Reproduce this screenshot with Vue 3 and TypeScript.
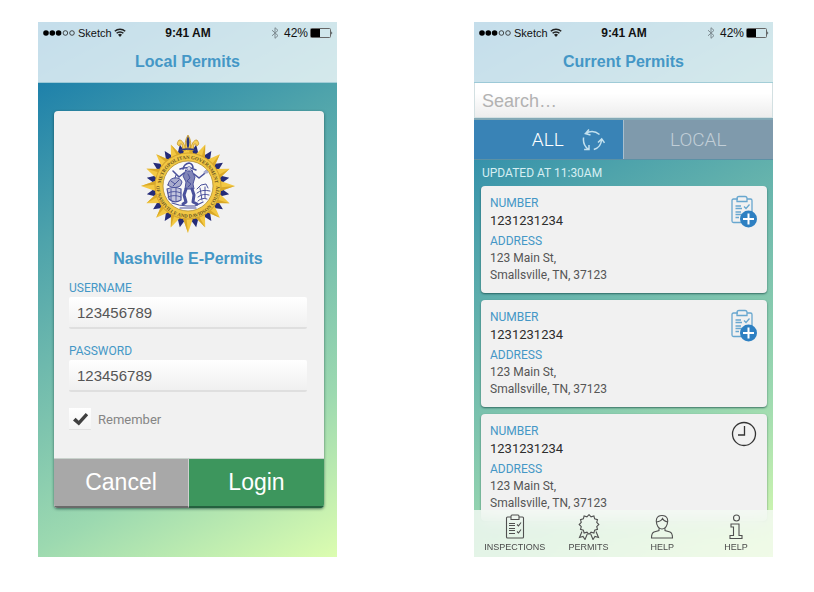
<script setup lang="ts">
import { ref } from 'vue'

interface Permit {
  id: number
  number: string
  street: string
  city: string
  status: 'add' | 'pending'
}

const username = ref('123456789')
const password = ref('123456789')
const remember = ref(true)
const query = ref('')
const filter = ref<'all' | 'local'>('all')

const permits: Permit[] = [
  { id: 1, number: '1231231234', street: '123 Main St,', city: 'Smallsville, TN, 37123', status: 'add' },
  { id: 2, number: '1231231234', street: '123 Main St,', city: 'Smallsville, TN, 37123', status: 'add' },
  { id: 3, number: '1231231234', street: '123 Main St,', city: 'Smallsville, TN, 37123', status: 'pending' },
]

const tabs = [
  { icon: 'clipboard', label: 'INSPECTIONS' },
  { icon: 'ribbon', label: 'PERMITS' },
  { icon: 'person', label: 'HELP' },
  { icon: 'info', label: 'HELP' },
]

// Radius on which the rays of the seal stand.
const RAY_BASE = 31

function polar(deg: number, r: number): string {
  const a = (deg * Math.PI) / 180
  return `${(Math.cos(a) * r).toFixed(2)},${(Math.sin(a) * r).toFixed(2)}`
}

// One triangular ray, from one base angle over the tip to the other.
function ray(angle: number, length: number, from: number, to: number): string {
  return `${polar(angle + from, RAY_BASE)} ${polar(angle, length)} ${polar(angle + to, RAY_BASE)}`
}

const steps = Array.from({ length: 16 }, (_, i) => i * 22.5)
const goldLength = (a: number) => (a % 90 === 0 ? 47 : 45)
const navyRays = steps.map((a) => ray(a + 11.25, 42, -10, 10))
const goldRays = steps.map((a) => ray(a, goldLength(a), -10.5, 10.5))
const goldShades = steps.map((a) => ray(a, goldLength(a), 3, 10.5))

const badge = Array.from({ length: 24 }, (_, i) => {
  const a = (i * Math.PI) / 12
  const r = i % 2 ? 8 : 9.8
  return `${(13 + Math.sin(a) * r).toFixed(2)},${(10.5 - Math.cos(a) * r).toFixed(2)}`
}).join(' ')
</script>

<template>
  <main class="screens">
    <section class="phone">
      <header class="top">
        <div class="status">
          <span class="carrier">
            <svg class="dots" viewBox="0 0 33 8" aria-hidden="true">
              <circle cx="3" cy="4" r="2.8" /><circle cx="9.3" cy="4" r="2.8" /><circle cx="15.6" cy="4" r="2.8" />
              <circle class="hollow" cx="22.4" cy="4" r="2.3" /><circle class="hollow" cx="29" cy="4" r="2.3" />
            </svg>
            Sketch
            <svg class="wifi" viewBox="0 0 12 9" aria-hidden="true">
              <path d="M.8 3.3a7.4 7.4 0 0 1 10.4 0M2.6 5.3a4.8 4.8 0 0 1 6.800 0" />
              <path class="solid" d="M4 6.8a2.8 2.8 0 0 1 4 0L6 8.9z" />
            </svg>
          </span>
          <span class="time">9:41 AM</span>
          <span class="power">
            <svg class="bluetooth" viewBox="0 0 8 12" aria-hidden="true"><path d="M1 3.2 7 8.6 4 11.3V.7L7 3.4 1 8.8" /></svg>
            42%
            <svg class="battery" viewBox="0 0 23 10" aria-hidden="true">
              <rect class="case" x=".5" y=".5" width="20" height="9" rx="1" /><rect x="1" y="1" width="9" height="8" />
              <path d="M21.5 3.2q1.5 1.8 0 3.6z" />
            </svg>
          </span>
        </div>
        <h1 class="heading">Local Permits</h1>
      </header>

      <div class="login-area">
        <form class="login" @submit.prevent>
          <div class="fields">
            <svg class="seal" viewBox="-48 -52 96 101" role="img" aria-label="Metropolitan Government seal">
              <defs>
                <path id="seal-upper" d="M-25.8 8A27 27 0 1 1 25.8 8" />
                <path id="seal-lower" d="M-31 -6A31.600 31.600 0 1 0 31 -6" />
              </defs>
              <polygon v-for="p in navyRays" :key="p" :points="p" fill="#242b78" />
              <polygon v-for="p in goldRays" :key="p" :points="p" fill="#f3c843" />
              <polygon v-for="p in goldShades" :key="p" :points="p" fill="#d9a827" />
              <path d="M-1-36Q-5-43 0-51Q5-43 1-36zM-2-36Q-5-47-9-46Q-13-41-8-40Q-9-43-6-42L-5-35zM2-36Q5-47 9-46Q13-41 8-40Q9-43 6-42L5-35z" fill="#f6d05a" stroke="#c5982b" stroke-width=".8" />
              <path d="M0-50Q-3-44 0-37Q3-44 0-50" fill="#26347e" />
              <path d="M-8-36Q0-38 8-36" fill="none" stroke="#303981" stroke-width="1.6" />
              <circle r="33.500" fill="#d3a42f" />
              <circle r="32.500" fill="#f1c744" />
              <circle r="25" fill="#f9f9f8" stroke="#b08f34" stroke-width=".8" />
              <text class="seal-text"><textPath href="#seal-upper" startOffset="50%" text-anchor="middle">METROPOLITAN GOVERNMENT</textPath></text>
              <text class="seal-text"><textPath href="#seal-lower" startOffset="50%" text-anchor="middle">OF NASHVILLE AND DAVIDSON COUNTY</textPath></text>
              <g fill="none" stroke="#4a519b" stroke-linecap="round" stroke-linejoin="round">
                <path d="M-5-17Q-4-22 1-23Q5-22 5-18M-8-17Q0-20 8-16" stroke-width="1.6" />
                <path d="M-2-16Q1-13 4-16L5-13 7-9 5-2 6 3-3 3-2-4-5-10-3-14z" fill="#8085b8" stroke-width="1" />
                <path d="M-4-13-9-9-15-15M6-12 11-8 16-12 18-15" stroke-width="1.6" />
                <path d="M-2 3-4 9-2 16-5 18M4 3 6 9 5 16 9 18" stroke-width="3" />
                <path d="M0-12 2-8-1-5 3-2 0 1" stroke-width="1" />
                <path d="M-20-1Q-19-7-14-8Q-8-9-6-4Q-7 1-10 1-16 3-20-1z" fill="#a9accd" stroke-width="1" />
                <path d="M-17-5-13-2-9-6M-15 0-11-4M-13-8-12-11" stroke-width="1" />
                <path d="M-21 3Q-14 0-7 3V14Q-14 18-19 13z" fill="#c3c5de" stroke-width="1.2" />
                <path d="M-20 7Q-14 4-7 7M-20 11Q-14 8-7 11M-17 3V14M-12 2V15" stroke-width=".9" />
                <path d="M9 3 13-1 18-2 20 2M9 7Q14 3 22 5M10 11Q15 7 21 9M10 15Q14 11 19 13M12 2 14 14M17 1 17 12" stroke-width="1" />
                <path d="M-16 17-9 19-1 20 7 20 15 16M-8 22H8" stroke-width="1.2" />
              </g>
              <circle cx="1" cy="-17.500" r="2" fill="#d9d9e6" stroke="#4a519b" stroke-width=".6" />
              <ellipse cx="18" cy="-14" rx="2.500" ry="1.600" fill="#a9accd" />
            </svg>
            <h2 class="brand">Nashville E-Permits</h2>

            <div class="field">
              <label for="username">USERNAME</label>
              <input id="username" v-model="username" type="text" autocomplete="off" />
            </div>
            <div class="field">
              <label for="password">PASSWORD</label>
              <input id="password" v-model="password" type="text" autocomplete="off" />
            </div>
            <label class="remember">
              <span class="box">
                <input v-model="remember" type="checkbox" />
                <svg v-if="remember" viewBox="0 0 22 22" aria-hidden="true"><path d="M4 12.4 6.6 9.8 9.7 12.8 16.7 5 19.2 7.3 9.9 17.5z" /></svg>
              </span>
              Remember
            </label>
          </div>
          <div class="actions">
            <button type="button" class="cancel">Cancel</button>
            <button type="submit" class="submit">Login</button>
          </div>
        </form>
      </div>
    </section>

    <section class="phone">
      <header class="top">
        <div class="status">
          <span class="carrier">
            <svg class="dots" viewBox="0 0 33 8" aria-hidden="true">
              <circle cx="3" cy="4" r="2.8" /><circle cx="9.3" cy="4" r="2.8" /><circle cx="15.6" cy="4" r="2.8" />
              <circle class="hollow" cx="22.4" cy="4" r="2.3" /><circle class="hollow" cx="29" cy="4" r="2.3" />
            </svg>
            Sketch
            <svg class="wifi" viewBox="0 0 12 9" aria-hidden="true">
              <path d="M.8 3.3a7.4 7.4 0 0 1 10.4 0M2.6 5.3a4.8 4.8 0 0 1 6.800 0" />
              <path class="solid" d="M4 6.8a2.8 2.8 0 0 1 4 0L6 8.9z" />
            </svg>
          </span>
          <span class="time">9:41 AM</span>
          <span class="power">
            <svg class="bluetooth" viewBox="0 0 8 12" aria-hidden="true"><path d="M1 3.2 7 8.6 4 11.3V.7L7 3.4 1 8.8" /></svg>
            42%
            <svg class="battery" viewBox="0 0 23 10" aria-hidden="true">
              <rect class="case" x=".5" y=".5" width="20" height="9" rx="1" /><rect x="1" y="1" width="9" height="8" />
              <path d="M21.5 3.2q1.5 1.8 0 3.6z" />
            </svg>
          </span>
        </div>
        <h1 class="heading">Current Permits</h1>
      </header>

      <input v-model="query" class="search" type="text" placeholder="Search…" aria-label="Search" />

      <div class="filters">
        <button type="button" :class="{ active: filter === 'all' }" @click="filter = 'all'">
          ALL
          <svg class="refresh" viewBox="0 0 24 24" aria-hidden="true">
            <path d="M4.500 5.500Q12 1 18.500 6.500M8 1.500 4.400 5.500 9.500 7M2.600 9.500Q1.500 17 7.500 21.500M3.100 21.600H8V17M12.800 21.400Q20 19.500 20.600 11.500M17 14.600 20.700 10.800 23.500 14.800" />
          </svg>
        </button>
        <button type="button" :class="{ active: filter === 'local' }" @click="filter = 'local'">LOCAL</button>
      </div>

      <p class="updated">UPDATED AT 11:30AM</p>

      <div class="list">
        <article v-for="permit in permits" :key="permit.id" class="permit">
          <dl>
            <dt>NUMBER</dt>
            <dd class="number">{{ permit.number }}</dd>
            <dt>ADDRESS</dt>
            <dd>{{ permit.street }}<br />{{ permit.city }}</dd>
          </dl>
          <svg v-if="permit.status === 'add'" class="mark add" viewBox="0 0 28 34" aria-hidden="true">
            <path d="M8 4H3.5Q2 4 2 5.500V26Q2 27.500 3.500 27.500H13M17 4H20.500Q22 4 22 5.500V17M9 1.500H15Q17 1.500 17 3.500V6.500H7V3.500Q7 1.500 9 1.500z" />
            <path d="M5.500 11H11M5.500 13.500H12M5.500 17H11M5.500 19.500H12M5.500 22.500H9M14 11.500 16 13.500 19.500 9.500" />
            <circle cx="18.500" cy="24" r="8.500" />
            <path class="plus" d="M18.500 18.500V29.500M13 24H24" />
          </svg>
          <svg v-else class="mark clock" viewBox="0 0 28 34" aria-hidden="true">
            <circle cx="14" cy="11" r="11.500" />
            <path d="M14.500 3V12H8" />
          </svg>
        </article>
      </div>

      <nav class="tabs">
        <a v-for="tab in tabs" :key="tab.icon" href="#">
          <svg viewBox="0 0 26 26" aria-hidden="true">
            <template v-if="tab.icon === 'clipboard'">
              <path d="M9 3H5.500Q4.500 3 4.500 4V23Q4.500 24 5.500 24H20.500Q21.500 24 21.500 23V4Q21.500 3 20.500 3H17M10 1H16Q17 1 17 2.500V5.500H9V2.500Q9 1 10 1z" />
              <path d="M7 9.500H13M7 11.500H13M7 14.500H13M7 16.500H13M7 19.500H13M15 10.500 16.500 12 19 8.500M15 17.500 16.500 19 19 15.500" />
            </template>
            <template v-else-if="tab.icon === 'ribbon'">
              <polygon :points="badge" />
              <path d="M6 17.500 3.500 23.500 7 22.500 9 25.500 11.500 19.500M20 17.500 22.500 23.500 19 22.500 17 25.500 14.500 19.500" />
            </template>
            <template v-else-if="tab.icon === 'person'">
              <path d="M13 1.500C7 1.500 6.500 7 7.800 10.200C9 14 11 15 13 15S17 14 18.200 10.200C19.500 7 19 1.500 13 1.500zM7.500 8Q12 7.500 13.500 4.500Q15 7.500 18.500 8M10 14.500V16.500L5 18Q2.500 19 2.500 24H23.500Q23.500 19 21 18L16 16.500V14.500" />
            </template>
            <template v-else>
              <circle cx="13.500" cy="4" r="3" />
              <path d="M8 10H16V21.500H19V24.500H7V21.500H10.500V13H8z" />
            </template>
          </svg>
          {{ tab.label }}
        </a>
      </nav>
    </section>
  </main>
</template>

<style>
body {
  margin: 0;
  background: #fff;
}
</style>

<style scoped>
* {
  box-sizing: border-box;
}

.screens {
  display: grid;
  grid-template-columns: 1fr 1fr;
  gap: 137px;
  padding: 22px 41px 36px 38px;
  font-family: Roboto, sans-serif;
}

.phone {
  position: relative;
  display: flex;
  flex-direction: column;
  min-width: 0;
  background: linear-gradient(152deg, #0c74aa 0%, #4ea3ab 32%, #9cd9b0 76%, #dcfdb0 100%);
}

button,
input {
  margin: 0;
  border: 0;
  border-radius: 0;
  font: inherit;
}

svg {
  flex: none;
}

.top {
  height: 61px;
  background: rgba(255, 255, 255, 0.76);
  border-bottom: 1px solid rgba(90, 165, 185, 0.4);
  font-family: "Liberation Sans", Arial, sans-serif;
}

.status {
  display: grid;
  grid-template-columns: 1fr auto 1fr;
  align-items: center;
  height: 21px;
  padding: 0 4px 0 5px;
  color: #111;
  font-size: 12px;
  line-height: 20px;
}

.carrier,
.power {
  display: flex;
  align-items: center;
  gap: 2px;
}

.carrier {
  font-size: 11px;
}

.power {
  justify-content: flex-end;
}

.time {
  font-weight: 700;
}

.dots {
  width: 33px;
  height: 8px;
}

.hollow {
  fill: none;
  stroke: #222;
  stroke-width: 0.8;
}

.wifi {
  width: 12px;
  height: 9px;
  fill: none;
  stroke: #222;
  stroke-width: 1.5;
}

.wifi .solid {
  fill: #222;
  stroke: none;
}

.bluetooth {
  width: 8px;
  height: 12px;
  margin-right: 3px;
  fill: none;
  stroke: #7d8a90;
  stroke-width: 1;
}

.battery {
  width: 23px;
  height: 10px;
}

.battery .case {
  fill: none;
  stroke: #666;
}

.heading {
  margin: 0;
  color: #4497c6;
  font-size: 16px;
  font-weight: 700;
  line-height: 38px;
  text-align: center;
}

.login-area {
  padding: 28px 13px 49px 16px;
}

.login {
  overflow: hidden;
  background: #f1f1f1;
  border-radius: 4px;
  box-shadow: 0 1px 3px rgba(0, 40, 40, 0.6);
}

.fields {
  padding: 23px 17px 28px 15px;
}

.seal {
  display: block;
  width: 96px;
  height: 101px;
  margin: 0 auto;
}

.seal-text {
  fill: #6b5520;
  font-family: "Liberation Serif", serif;
  font-size: 5px;
  font-weight: 700;
}

.brand {
  margin: 12px 0 9px;
  color: #4497c6;
  font-family: "Liberation Sans", Arial, sans-serif;
  font-size: 16px;
  line-height: 24px;
  text-align: center;
}

.field {
  margin-bottom: 14px;
}

.field label {
  display: block;
  height: 17px;
  color: #4497c6;
  font-size: 12px;
  line-height: 16px;
}

.field input {
  display: block;
  width: 100%;
  height: 32px;
  padding: 0 8px;
  background: linear-gradient(#fff, #f0f0f0);
  border-bottom: 2px solid #dfdfdf;
  border-radius: 2px;
  color: #555;
  font-family: "Liberation Sans", Arial, sans-serif;
  font-size: 15px;
}

.remember {
  display: flex;
  align-items: center;
  gap: 7px;
  margin-top: 16px;
  color: #858585;
  font-size: 13px;
}

.box {
  display: grid;
  width: 22px;
  height: 22px;
  background: linear-gradient(#fff, #f4f4f4);
  border-bottom: 1px solid #e2e2e2;
}

.box > * {
  grid-area: 1 / 1;
  width: 22px;
  height: 22px;
}

.box input {
  appearance: none;
}

.box svg {
  fill: #414141;
  pointer-events: none;
}

.actions {
  display: grid;
  grid-template-columns: 1fr 1fr;
  border-top: 1px solid #c9d2cc;
}

.actions button {
  height: 49px;
  border-bottom: 2px solid #24613f;
  color: #fff;
  font-family: "Liberation Sans", Arial, sans-serif;
  font-size: 23px;
}

.actions .cancel {
  background: #a8a8a8;
  border-right: 1px solid #d0d0d0;
  border-bottom-color: #6a6a6a;
}

.actions .submit {
  background: #3d965d;
}

.search {
  height: 35px;
  padding: 2px 7px 0;
  background: linear-gradient(#fff 30%, #ededed);
  border: 1px solid #d3e0e2;
  border-top: 0;
  color: #555;
  font-family: "Liberation Sans", Arial, sans-serif;
  font-size: 18px;
}

.search::placeholder {
  color: #b2b2b2;
  opacity: 1;
}

.filters {
  display: grid;
  grid-template-columns: 1fr 1fr;
  border-top: 2px solid #83a9b6;
  border-bottom: 1px solid #5b91a5;
}

.filters button {
  display: flex;
  align-items: center;
  justify-content: center;
  gap: 17px;
  height: 39px;
  background: #7f9aac;
  color: #c1ced7;
  font-size: 19px;
  font-weight: 300;
}

.filters button.active {
  background: #3983b6;
  border-right: 1px solid #a8bfce;
  padding-left: 40px;
  padding-right: 0;
  color: #fff;
}

.refresh {
  width: 24px;
  height: 24px;
  fill: none;
  stroke: #c3e1ef;
  stroke-width: 1.5;
}

.updated {
  margin: 0;
  padding: 6px 8px 5px;
  color: #d6eef2;
  font-size: 12px;
  line-height: 15px;
}

.list {
  display: flex;
  flex: 1 1 0;
  flex-direction: column;
  gap: 7px;
  min-height: 0;
  padding: 0 6px 0 7px;
  overflow: hidden;
}

.permit {
  display: flex;
  flex: none;
  justify-content: space-between;
  padding: 9px;
  background: #f1f1f1;
  border-radius: 4px;
  box-shadow: 0 1px 2px rgba(0, 50, 50, 0.6);
}

dl {
  margin: 0;
  color: #555;
  font-size: 12px;
  line-height: 17px;
}

dt {
  color: #4497c6;
}

dd {
  margin: 0;
}

.number {
  margin-bottom: 4px;
  color: #2d2d2d;
  font-size: 13px;
}

.mark {
  width: 28px;
  height: 34px;
  overflow: visible;
  fill: none;
  stroke: #68a7cf;
  stroke-width: 1.3;
}

.add circle {
  fill: #2e80c2;
  stroke: none;
}

.add .plus {
  stroke: #fff;
  stroke-width: 2;
}

.clock {
  stroke: #333;
}

.tabs {
  position: absolute;
  right: 0;
  bottom: 0;
  left: 0;
  display: grid;
  grid-template-columns: repeat(4, 1fr);
  padding: 4px 0 3px 4px;
  background: rgba(245, 250, 245, 0.8);
  backdrop-filter: blur(8px);
}

.tabs a {
  display: flex;
  flex-direction: column;
  align-items: center;
  gap: 1px;
  color: #4a4a4a;
  font-family: "Liberation Sans", Arial, sans-serif;
  font-size: 9px;
  line-height: 13px;
  text-decoration: none;
}

.tabs svg {
  width: 26px;
  height: 26px;
  fill: none;
  stroke: #505050;
  stroke-width: 1.1;
}
</style>
